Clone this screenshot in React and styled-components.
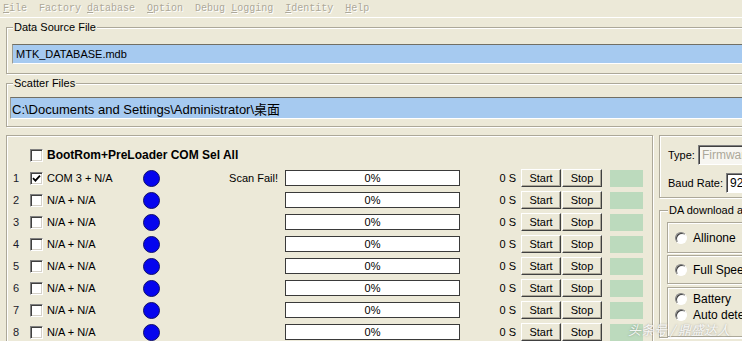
import React from 'react'
import styled, { createGlobalStyle } from 'styled-components'

const GlobalStyle = createGlobalStyle`
  body {
    margin: 0;
    background: #ece9d8;
    overflow: hidden;
  }
`

const menus = [
    { pre: '', key: 'F', rest: 'ile' },
    { pre: 'Factory ', key: 'd', rest: 'atabase' },
    { pre: '', key: 'O', rest: 'ption' },
    { pre: 'Debug ', key: 'L', rest: 'ogging' },
    { pre: '', key: 'I', rest: 'dentity' },
    { pre: '', key: 'H', rest: 'elp' },
]

const ports = ['COM 3 + N/A', 'N/A + N/A', 'N/A + N/A', 'N/A + N/A', 'N/A + N/A', 'N/A + N/A', 'N/A + N/A', 'N/A + N/A']

const Check = ({ checked }) => (
    <CheckBox>
        {checked && (
            <svg width="9" height="9" viewBox="0 0 9 9">
                <path d="M1 4.2 L3.4 6.6 L8 1.6" fill="none" stroke="#000" strokeWidth="1.8" />
            </svg>
        )}
    </CheckBox>
)

const App = () => {
    return (
        <Page>
            <GlobalStyle />
            <MenuBar>
                {menus.map(m => (
                    <MenuItem key={m.pre + m.key}>
                        {m.pre}<u>{m.key}</u>{m.rest}
                    </MenuItem>
                ))}
            </MenuBar>

            <Content>
                <GroupBox $top={3} $pad="11px 0 9px">
                    <Legend>Data Source File</Legend>
                    <PathField $indent={5} $h={18} $size={11} $pl={3}>MTK_DATABASE.mdb</PathField>
                </GroupBox>

                <GroupBox $top={3} $pad="8px 0 7px">
                    <Legend>Scatter Files</Legend>
                    <PathField $indent={3} $h={20} $size={13} $pl={1}>
                        C:\Documents and Settings\Administrator\桌面
                    </PathField>
                </GroupBox>

                <Lower>
                    <PortPanel>
                        <HeaderRow>
                            <Check />
                            <HeaderLabel>BootRom+PreLoader COM Sel All</HeaderLabel>
                        </HeaderRow>
                        {ports.map((p, i) => (
                            <PortRow key={i}>
                                <Num>{i + 1}</Num>
                                <Check checked={i === 0} />
                                <PortName>{p}</PortName>
                                <Dot />
                                <Status>{i === 0 ? 'Scan Fail!' : ''}</Status>
                                <Progress>0%</Progress>
                                <Time>0 S</Time>
                                <Button>Start</Button>
                                <Button>Stop</Button>
                                <Led />
                            </PortRow>
                        ))}
                    </PortPanel>

                    <SideColumn>
                        <SettingsBox>
                            <FormRow>
                                <span>Type:</span>
                                <TextInput $disabled>Firmware</TextInput>
                            </FormRow>
                            <FormRow>
                                <span>Baud Rate:</span>
                                <TextInput>921600</TextInput>
                            </FormRow>
                        </SettingsBox>

                        <GroupBox $top={6} $pad="6px 0 0 7px">
                            <Legend $ml={1}>DA download all</Legend>
                            <OptionBox $h={31}>
                                <Option><Radio />Allinone</Option>
                            </OptionBox>
                            <OptionBox $h={29} $gap={2}>
                                <Option><Radio />Full Speed</Option>
                            </OptionBox>
                            <OptionBox $h={50} $gap={3} $column>
                                <Option><Radio />Battery</Option>
                                <Option><Radio />Auto detect</Option>
                            </OptionBox>
                        </GroupBox>
                    </SideColumn>
                </Lower>
            </Content>

            <Watermark>头条号 / 鼎盛达人</Watermark>
        </Page>
    )
}

const Page = styled.div`
    position: relative;
    width: 742px;
    height: 341px;
    overflow: hidden;
    background: #ece9d8;
    font-family: 'Liberation Sans', Arial, sans-serif;
    font-size: 11px;
    color: #000;
`

const MenuBar = styled.div`
    display: flex;
    align-items: center;
    gap: 12px;
    height: 17px;
    padding: 0 3px;
    border-bottom: 1px solid #fff;
    font-family: 'Liberation Mono', monospace;
    font-size: 10px;
    color: #aca899;
    text-shadow: 1px 1px 0 #fff;
`

const MenuItem = styled.span`
    white-space: pre;
`

const Content = styled.div`
    width: 770px;
    padding-left: 6px;
`

const GroupBox = styled.fieldset`
    margin: ${p => p.$top}px 0 0;
    padding: ${p => p.$pad};
    min-width: 0;
    border: 1px solid #aca899;
    box-shadow: inset 1px 1px 0 #fff, 1px 1px 0 #fff;
`

const Legend = styled.legend`
    margin-left: ${p => p.$ml ?? 6}px;
    padding: 0 1px;
    font-size: 11px;
    line-height: 12px;
    background: #ece9d8;
    white-space: nowrap;
`

const PathField = styled.div`
    display: flex;
    align-items: center;
    margin-left: ${p => p.$indent}px;
    height: ${p => p.$h}px;
    padding-left: ${p => p.$pl}px;
    background: #a6caf0;
    border-top: 1px solid #716f64;
    border-left: 1px solid #9c9a8f;
    border-bottom: 1px solid #fff;
    font-size: ${p => p.$size}px;
    font-family: 'Liberation Sans', 'Noto Sans CJK SC', sans-serif;
    white-space: nowrap;
`

const Lower = styled.div`
    display: flex;
    gap: 6px;
    margin-top: 8px;
`

const PortPanel = styled.div`
    box-sizing: border-box;
    width: 647px;
    height: 220px;
    padding: 7px 0 0 6px;
    border: 1px solid #aca899;
    box-shadow: inset 1px 1px 0 #fff, 1px 1px 0 #fff;
`

const HeaderRow = styled.div`
    display: flex;
    align-items: center;
    gap: 4px;
    height: 24px;
    padding-left: 17px;
`

const HeaderLabel = styled.span`
    font-size: 12px;
    font-weight: bold;
`

const PortRow = styled.div`
    display: flex;
    align-items: center;
    height: 22px;
`

const Num = styled.span`
    width: 17px;
    color: #1a1a2a;
`

const CheckBox = styled.span`
    box-sizing: border-box;
    display: flex;
    align-items: center;
    justify-content: center;
    width: 13px;
    height: 13px;
    background: #fff;
    border: 1px solid;
    border-color: #808080 #fff #fff #808080;
    box-shadow: inset 1px 1px 0 #404040, inset -1px -1px 0 #d4d0c8;
`

const PortName = styled.span`
    width: 96px;
    margin-left: 4px;
    white-space: nowrap;
`

const Dot = styled.span`
    box-sizing: border-box;
    width: 17px;
    height: 17px;
    border-radius: 50%;
    background: #0505ee;
    border: 1px solid #10106a;
`

const Status = styled.span`
    width: 118px;
    text-align: right;
`

const Progress = styled.div`
    box-sizing: border-box;
    display: flex;
    align-items: center;
    justify-content: center;
    width: 175px;
    height: 16px;
    margin-left: 7px;
    background: #fff;
    border: 1px solid #3a3a3a;
`

const Time = styled.span`
    width: 56px;
    padding-right: 5px;
    text-align: right;
`

const Button = styled.button`
    box-sizing: border-box;
    width: 40px;
    height: 18px;
    margin-right: 1px;
    padding: 0;
    background: #ece9d8;
    border: 1px solid;
    border-color: #fff #404040 #404040 #fff;
    box-shadow: inset -1px -1px 0 #aca899;
    font-family: 'Liberation Sans', Arial, sans-serif;
    font-size: 11px;
    color: #000;
`

const Led = styled.span`
    width: 33px;
    height: 17px;
    margin-left: 7px;
    background: #bcdabd;
`

const SideColumn = styled.div`
    display: flex;
    flex-direction: column;
    width: 110px;
    flex-shrink: 0;
`

const SettingsBox = styled.div`
    box-sizing: border-box;
    display: flex;
    flex-direction: column;
    gap: 8px;
    height: 63px;
    padding: 9px 0 0 8px;
    border: 1px solid #aca899;
    box-shadow: inset 1px 1px 0 #fff, 1px 1px 0 #fff;
`

const FormRow = styled.div`
    display: flex;
    align-items: center;
    gap: 3px;
    height: 20px;
    white-space: nowrap;
`

const TextInput = styled.span`
    box-sizing: border-box;
    display: flex;
    align-items: center;
    width: 70px;
    height: 20px;
    padding-left: 3px;
    background: ${p => (p.$disabled ? '#f7f6f1' : '#fff')};
    color: ${p => (p.$disabled ? '#aca899' : '#000')};
    border: 1px solid;
    border-color: #808080 #fff #fff #808080;
    box-shadow: inset 1px 1px 0 #404040;
    font-size: 12px;
`

const OptionBox = styled.div`
    box-sizing: border-box;
    display: flex;
    flex-direction: ${p => (p.$column ? 'column' : 'row')};
    align-items: ${p => (p.$column ? 'stretch' : 'center')};
    height: ${p => p.$h}px;
    margin-top: ${p => p.$gap ?? 0}px;
    padding: ${p => (p.$column ? '3px 0 0 7px' : '0 0 0 7px')};
    border: 1px solid #aca899;
    box-shadow: inset 1px 1px 0 #fff, 1px 1px 0 #fff;
`

const Option = styled.label`
    display: flex;
    align-items: center;
    gap: 6px;
    height: 16px;
    font-size: 12px;
    white-space: nowrap;
`

const Radio = styled.span`
    box-sizing: border-box;
    width: 12px;
    height: 12px;
    border-radius: 50%;
    background: #fff;
    border: 1px solid;
    border-color: #808080 #fff #fff #808080;
    box-shadow: inset 1px 1px 0 #404040;
`

const Watermark = styled.div`
    position: absolute;
    left: 628px;
    top: 320px;
    font-family: 'Noto Sans CJK SC', sans-serif;
    font-size: 13px;
    font-style: italic;
    color: rgba(255, 255, 255, 0.9);
    text-shadow: 0 0 2px rgba(80, 80, 80, 0.5);
    white-space: nowrap;
`

export default App
